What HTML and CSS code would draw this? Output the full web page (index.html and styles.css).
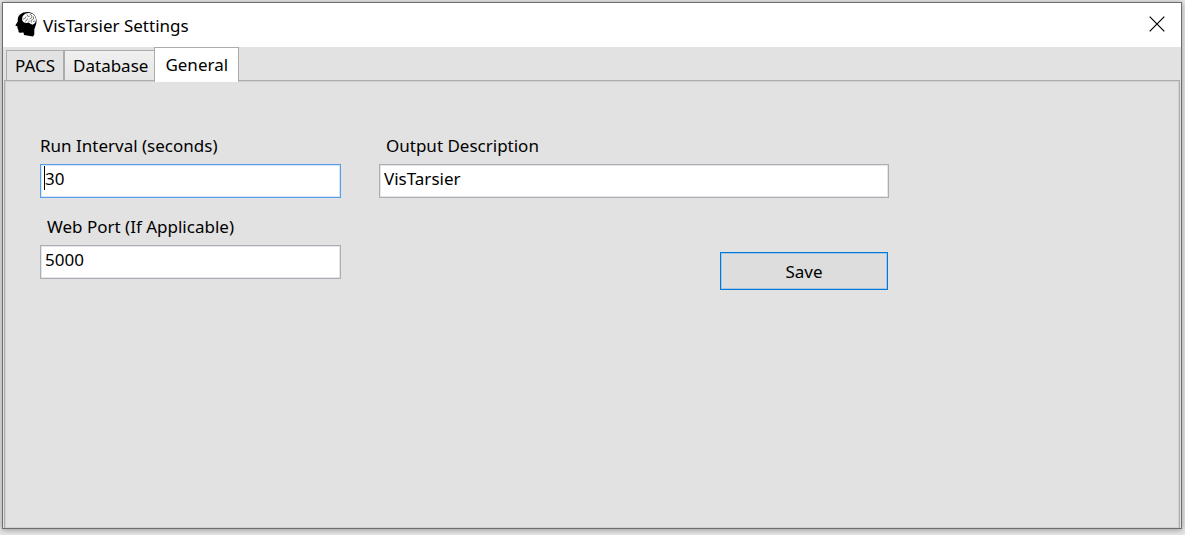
FILE: index.html
```html
<!DOCTYPE html>
<html lang="en">
<head>
<meta charset="utf-8">
<title>VisTarsier Settings</title>
<link rel="stylesheet" href="styles.css">
</head>
<body>
<main class="window">
  <header class="titlebar">
    <svg class="logo" viewBox="0 0 22 25" aria-hidden="true">
      <path d="M5 2.500C7 .8 9.500 0 12.500 0C18 0 21.500 3.500 21.500 9C21.500 13 19.800 15 19.300 17.500V22.500L18 24.500L9 23L8.500 20.500L5 20.800C3.800 20.800 3.300 20 3.500 18.800L3 17L2.300 16L2.600 14.500L.3 13.500L2.800 9.500C2.500 6.500 3 4.200 5 2.500Z"/>
      <path class="brain" d="M7.500 9C6.800 7 7.200 4.500 8.500 3.300C10 1.500 12.500 .8 15 1.200C17.800 1.400 20 3.200 20.500 5.500C21.300 7.500 21 10 19.500 11.500L17.500 12.800L15.500 11.800L13.500 10.500C11.500 11.300 8.500 11 7.500 9Z"/>
      <path class="folds" d="M8 7L10 6.500L11 4.500M10 9.500L12 8L12.500 6.500M12 2.500L13 4.500L15 4M15 2L17 4L16.500 6L14.500 7M18.500 4.500V7L16 8.500L16.500 10.500M14 8.500V10M18 9.500L20 9"/>
    </svg>
    <h1 class="title">VisTarsier Settings</h1>
    <button class="close" type="button" aria-label="Close">
      <svg class="close-icon" viewBox="0 0 16 16" aria-hidden="true"><path d="M.7 .7L15.300 15.300M15.300 .7L.7 15.300"/></svg>
    </button>
  </header>
  <div class="tabs" role="tablist">
    <button class="tab" type="button" role="tab" aria-selected="false">PACS</button>
    <button class="tab" type="button" role="tab" aria-selected="false">Database</button>
    <button class="tab tab-active" type="button" role="tab" aria-selected="true">General</button>
  </div>
  <section class="panel" role="tabpanel" aria-label="General">
    <form class="form">
      <div class="field field-focused">
        <label class="label" for="interval">Run Interval (seconds)</label>
        <div class="control"><input class="input" id="interval" type="text" value="30"></div>
      </div>
      <div class="field">
        <label class="label label-indent" for="description">Output Description</label>
        <div class="control"><input class="input" id="description" type="text" value="VisTarsier"></div>
      </div>
      <div class="field">
        <label class="label label-indent" for="port">Web Port (If Applicable)</label>
        <div class="control"><input class="input" id="port" type="text" value="5000"></div>
      </div>
      <button class="save" type="button">Save</button>
    </form>
  </section>
</main>
</body>
</html>
```
FILE: styles.css
```css
* {
  box-sizing: border-box;
}

body {
  display: flex;
  min-height: 100vh;
  margin: 0;
  padding: 2px 3px 6px 2px;
  background: #e6e6e6;
  color: #000;
  font: 17px/24px "Noto Sans", "Open Sans", sans-serif;
}

button,
input {
  margin: 0;
  color: inherit;
  font: inherit;
}

.window {
  display: flex;
  flex: 1;
  flex-direction: column;
  border: 1px solid #6e6e6e;
  background: #e2e2e2;
  box-shadow: 0 1px 6px rgb(0 0 0 / 35%);
}

.titlebar {
  display: flex;
  align-items: center;
  height: 44px;
  padding: 0 16px 2px 12px;
  background: #fff;
}

.logo {
  width: 22px;
  height: 25px;
}

.brain {
  fill: #fff;
}

.folds {
  fill: none;
  stroke: #000;
  stroke-width: 0.5;
}

.title {
  flex: 1;
  margin: 0 0 0 6px;
  padding-top: 4px;
  font-size: 17px;
  font-weight: 400;
}

.close {
  display: flex;
  padding: 0;
  border: 0;
  background: none;
}

.close-icon {
  width: 16px;
  height: 16px;
  fill: none;
  stroke: #000;
  stroke-width: 1.2;
}

.tabs {
  display: flex;
  align-items: flex-end;
  height: 34px;
  padding-left: 3px;
}

.tab {
  height: 31px;
  padding: 0 8px;
  border: 1px solid #acacac;
  border-bottom: 0;
  background: linear-gradient(#f0f0f0, #e5e5e5);
}

.tab:first-child {
  border-right-width: 2px;
  background: #e2e2e2;
}

.tab:nth-child(2) {
  padding-right: 6px;
  border-right: 0;
  border-left: 0;
}

.tab-active {
  z-index: 1;
  height: 35px;
  margin-bottom: -1px;
  padding: 0 10px;
  background: #fff;
}

.panel {
  flex: 1;
  margin: -1px 1px 0;
  padding: 53px 35px 24px;
  border: solid #acacac;
  border-width: 1px 1px 0;
  box-shadow: inset 0 0 0 1px #d2d2d2;
}

.form {
  display: grid;
  grid-template-columns: 301fr 510fr;
  gap: 17px 38px;
  max-width: 849px;
}

.field {
  display: flex;
  flex-direction: column;
  gap: 6px;
}

.label-indent {
  padding-left: 7px;
}

.control {
  position: relative;
  display: flex;
}

.input {
  width: 100%;
  height: 34px;
  padding: 0 4px 6px;
  border: 1px solid #abadb3;
  border-radius: 0;
  outline: 0;
  background: #fff;
  box-shadow: inset 0 0 0 1px #e6e6ea;
}

.field-focused .input {
  border-color: #569de5;
  box-shadow: inset 0 0 0 1px #d5e7f8;
}

.field-focused .control::before {
  position: absolute;
  top: 2px;
  left: 4px;
  width: 1px;
  height: 24px;
  background: #000;
  content: "";
}

.save {
  align-self: start;
  justify-self: end;
  width: 168px;
  height: 38px;
  margin: 37px 1px 0 0;
  padding: 3px 6px 1px;
  border: 1px solid #0078d7;
  background: #ddd;
  box-shadow: inset 0 0 0 1px #a5c7e3;
}
```
